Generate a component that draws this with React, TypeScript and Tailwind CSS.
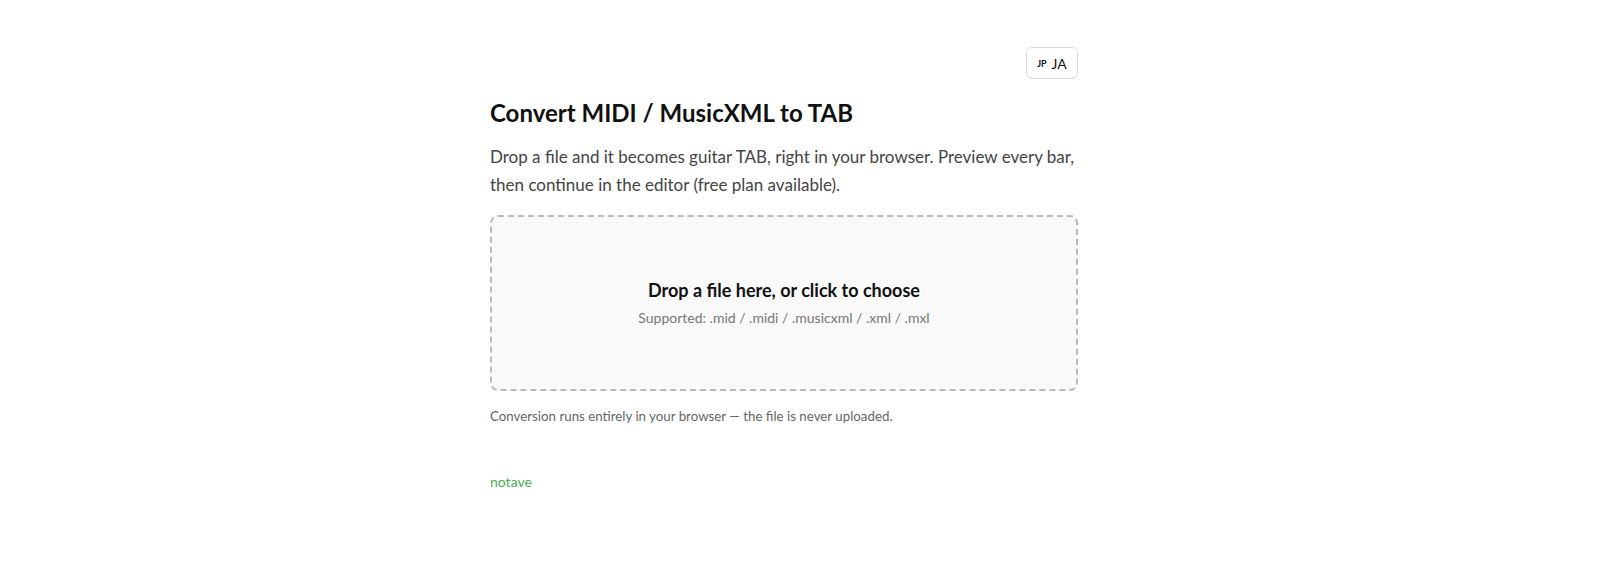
export default function App() {
  return (
    <div
      className="min-h-[580px] bg-white flex justify-center pr-[32px]"
      style={{ fontFamily: 'Lato, "Liberation Sans", sans-serif' }}
    >
      <main className="w-[588px] pt-[47px]">
        <div className="flex justify-end">
          <button
            type="button"
            className="h-[32px] w-[52px] rounded-md border border-[#dddddd] bg-white flex items-center justify-center gap-[5px] text-[#111]"
          >
            <span className="text-[9px] font-bold mt-[2px]">JP</span>
            <span className="text-[14px]">JA</span>
          </button>
        </div>
        <h1 className="mt-[17px] text-[24px] leading-[34px] font-bold text-[#111]">
          Convert MIDI / MusicXML to TAB
        </h1>
        <p className="mt-[13px] text-[17px] leading-[28px] text-[#444]">
          Drop a file and it becomes guitar TAB, right in your browser. Preview every bar, then continue in the editor (free plan available).
        </p>
        <div className="mt-[16px] h-[176px] rounded-lg border-2 border-dashed border-[#bbbbbb] bg-[#f9f9f9] flex flex-col items-center justify-center cursor-pointer">
          <div className="text-[18px] leading-[24px] font-bold text-[#111]">Drop a file here, or click to choose</div>
          <div className="mt-[6px] text-[14px] leading-[20px] text-[#777]">Supported: .mid / .midi / .musicxml / .xml / .mxl</div>
        </div>
        <p className="mt-[16px] text-[13.3px] text-[#666]">
          Conversion runs entirely in your browser — the file is never uploaded.
        </p>
        <footer className="mt-[42px]">
          <a href="#" className="text-[14px] text-[#4caf50]">notave</a>
        </footer>
      </main>
    </div>
  );
}
